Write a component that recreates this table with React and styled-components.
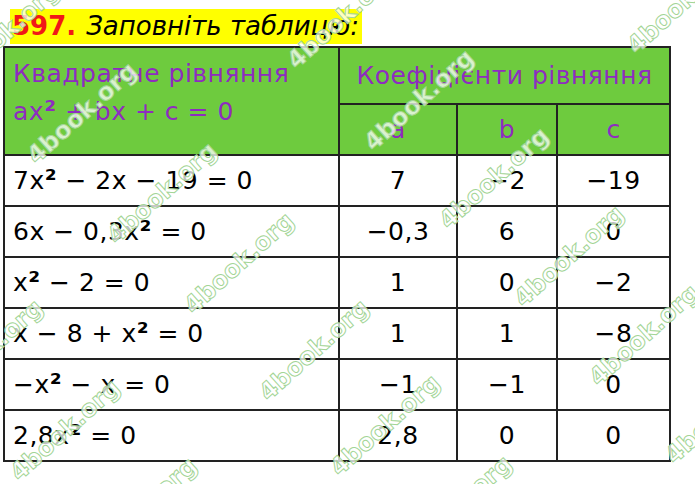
import React from "react";
import styled, { createGlobalStyle } from "styled-components";

const GlobalStyle = createGlobalStyle`
  html, body {
    margin: 0;
    padding: 0;
    background: #ffffff;
  }
  body {
    font-family: "DejaVu Sans", Verdana, sans-serif;
  }
`;

const rows = [
  { eq: ["7x", "sq", " − 2x − 19 = 0"], a: "7", b: "−2", c: "−19" },
  { eq: ["6x − 0,3x", "sq", " = 0"], a: "−0,3", b: "6", c: "0" },
  { eq: ["x", "sq", " − 2 = 0"], a: "1", b: "0", c: "−2" },
  { eq: ["x − 8 + x", "sq", " = 0"], a: "1", b: "1", c: "−8" },
  { eq: ["−x", "sq", " − x = 0"], a: "−1", b: "−1", c: "0" },
  { eq: ["2,8x", "sq", " = 0"], a: "2,8", b: "0", c: "0" },
];

// centres of the 4book.org marks
const marks = [
  [5, 33], [82, 113], [162, 193], [239, 263], [314, 350], [385, 425], [457, 506],
  [342, 18], [419, 100], [494, 178], [569, 256], [644, 335], [720, 413],
  [682, 3], [-12, 350], [65, 430], [142, 508],
];

const Eq = ({ parts }) => (
  <>
    {parts.map((p, i) => (p === "sq" ? <Sq key={i}>²</Sq> : <span key={i}>{p}</span>))}
  </>
);

const App = () => {
  return (
    <>
      <GlobalStyle />
      <Page>
        <TitleBar>
          <Num>597.</Num>
          <Task>Заповніть таблицю:</Task>
        </TitleBar>
        <Table>
          <colgroup>
            <col style={{ width: 335 }} />
            <col style={{ width: 118 }} />
            <col style={{ width: 100 }} />
            <col style={{ width: 113 }} />
          </colgroup>
          <thead>
            <HeadRow $h={57}>
              <HeadCell rowSpan={2} $left>
                Квадратне рівняння
                <br />
                ax<Sq>²</Sq> + bx + c = 0
              </HeadCell>
              <HeadCell colSpan={3}>Коефіцієнти рівняння</HeadCell>
            </HeadRow>
            <HeadRow $h={51}>
              <HeadCell>a</HeadCell>
              <HeadCell>b</HeadCell>
              <HeadCell>c</HeadCell>
            </HeadRow>
          </thead>
          <tbody>
            {rows.map((r, i) => (
              <Row key={i}>
                <Cell $left>
                  <Eq parts={r.eq} />
                </Cell>
                <Cell>{r.a}</Cell>
                <Cell>{r.b}</Cell>
                <Cell>{r.c}</Cell>
              </Row>
            ))}
          </tbody>
        </Table>
        {marks.map(([x, y], i) => (
          <Mark key={i} $x={x} $y={y}>
            4book.org
          </Mark>
        ))}
      </Page>
    </>
  );
};

export default App;

const Page = styled.div`
  position: relative;
  width: 695px;
  height: 484px;
  overflow: hidden;
  background: #ffffff;
`;

const TitleBar = styled.div`
  display: inline-flex;
  align-items: center;
  gap: 10px;
  margin: 9px 0 0 10px;
  height: 35px;
  padding: 0 3px 0 2px;
  background: #ffff00;
  font-size: 26px;
  line-height: 35px;
`;

const Num = styled.span`
  color: #f11818;
  font-weight: bold;
`;

const Task = styled.span`
  color: #000000;
  font-style: italic;
`;

const Table = styled.table`
  margin: 2px 0 0 3px;
  width: 666px;
  border-collapse: collapse;
  table-layout: fixed;
  font-size: 25px;
  letter-spacing: 0.5px;
`;

const HeadRow = styled.tr`
  height: ${(p) => p.$h}px;
`;

const HeadCell = styled.th`
  background: #6ecb3e;
  color: #8e2cc0;
  font-weight: normal;
  border: 2px solid #222222;
  text-align: ${(p) => (p.$left ? "left" : "center")};
  vertical-align: ${(p) => (p.$left ? "top" : "middle")};
  padding: ${(p) => (p.$left ? "7px 0 0 8px" : "0")};
  line-height: ${(p) => (p.$left ? "38px" : "normal")};
  white-space: nowrap;
`;

const Row = styled.tr`
  height: 51px;
`;

const Cell = styled.td`
  border: 2px solid #222222;
  color: #000000;
  text-align: ${(p) => (p.$left ? "left" : "center")};
  padding: ${(p) => (p.$left ? "0 0 0 8px" : "0")};
  white-space: nowrap;
`;

const Sq = styled.span`
  font-weight: bold;
  font-size: 1.08em;
  line-height: 0;
`;

const Mark = styled.div`
  position: absolute;
  left: ${(p) => p.$x}px;
  top: ${(p) => p.$y}px;
  transform: translate(-50%, -50%) rotate(-42deg);
  font-family: "DejaVu Sans", sans-serif;
  font-weight: bold;
  font-size: 24px;
  color: rgba(255, 255, 255, 0.75);
  -webkit-text-stroke: 1px #a3d596;
  white-space: nowrap;
  pointer-events: none;
`;
